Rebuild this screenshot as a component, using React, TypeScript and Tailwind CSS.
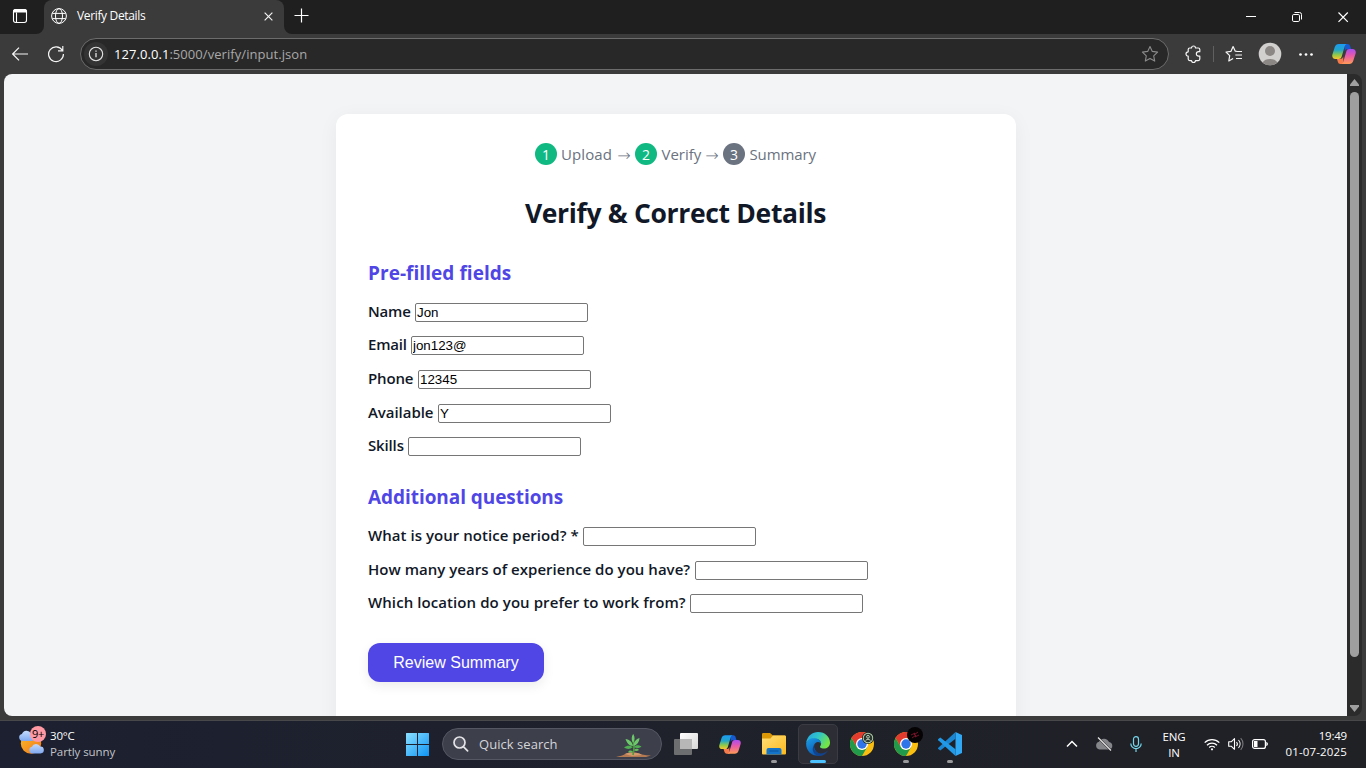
import React from "react";

const UI = "font-['Open_Sans','Noto_Sans',sans-serif]";

const prefilled = [
  { label: "Name", value: "Jon", row: "h-[33px]", cls: "w-[47px] tracking-[-0.2px]" },
  { label: "Email", value: "jon123@", row: "h-[34px]", cls: "w-[43px] tracking-[-0.2px]" },
  { label: "Phone", value: "12345", row: "h-[34px]", cls: "w-[50px] tracking-[-0.150px]" },
  { label: "Available", value: "Y", row: "h-[33px]", cls: "w-[70px] tracking-[-0.050px]" },
  { label: "Skills", value: "", row: "h-[34px]", cls: "w-[40px] tracking-[-0.150px]" },
];

const questions = [
  { label: "What is your notice period? *", value: "", row: "h-[34px]", cls: "w-[215px] tracking-[0.040px]" },
  { label: "How many years of experience do you have?", value: "", row: "h-[33px]", cls: "w-[327px] tracking-[0.030px]" },
  { label: "Which location do you prefer to work from?", value: "", row: "h-[34px]", cls: "w-[322px] tracking-[0.080px]" },
];

function Field({ label, value, row, cls }: { label: string; value: string; row: string; cls: string }) {
  return (
    <label className={`${row} flex items-start pt-[7px] text-[15px] font-semibold text-[#111827]`}>
      <span className={`${cls} shrink-0 whitespace-nowrap leading-[17px]`}>{label}</span>
      <input
        defaultValue={value}
        className="h-[19px] w-[173px] rounded-[2px] border border-[#767676] bg-white px-px pb-px font-['Liberation_Sans',Arial,sans-serif] text-[13.333px] font-normal leading-4 tracking-normal text-black outline-none"
      />
    </label>
  );
}

function Step({ n, label, color, cls }: { n: string; label: string; color: string; cls: string }) {
  return (
    <span className="flex items-center">
      <span className={`${color} mr-1 flex size-[22px] items-center justify-center rounded-full text-[14px] text-white`}>{n}</span>
      <span className={`${cls} whitespace-nowrap`}>{label}</span>
    </span>
  );
}

function Arrow() {
  return <span className="ml-[5px] mr-1 flex w-[14px] justify-center pt-[3px] font-['DejaVu_Sans',sans-serif] text-[16px] font-light leading-none">→</span>;
}

function Copilot({ id, className }: { id: string; className: string }) {
  return (
    <svg viewBox="0 0 24 22" className={className}>
      <defs>
        <linearGradient id={`${id}a`} x1="0" y1="0" x2="0" y2="1">
          <stop offset="0" stopColor="#1c9bf0" />
          <stop offset=".4" stopColor="#22a6c8" />
          <stop offset=".72" stopColor="#8fc94a" />
          <stop offset="1" stopColor="#fbc62c" />
        </linearGradient>
        <linearGradient id={`${id}b`} x1="0" y1="0" x2="0" y2="1">
          <stop offset="0" stopColor="#a94df0" />
          <stop offset=".45" stopColor="#e85aa8" />
          <stop offset="1" stopColor="#ff9a56" />
        </linearGradient>
      </defs>
      <path d="M12.500 1h3.200c1.300 0 2 .8 2.400 2l1 3h-3.400c-1.600 0-2.400.8-2.900 2.400z" fill="#1759d0" />
      <path d="M11.500 21H8.300c-1.300 0-2-.8-2.400-2l-.9-3h3.300c1.600 0 2.400-.8 2.900-2.400z" fill="#f77a4a" />
      <path d="M6.800 1H15c-1.300.2-1.900 1-2.300 2.300l-3 10.200c-.5 1.700-1.300 2.500-3 2.500H3.400C.8 16-.2 14 .4 11.500L2.800 4C3.500 2 4.800 1 6.800 1z" fill={`url(#${id}a)`} />
      <path d="M17.200 21H9c1.300-.2 1.900-1 2.300-2.300l3-10.200c.5-1.700 1.300-2.500 3-2.500h3.300c2.600 0 3.600 2 3 4.500L21.200 18c-.7 2-2 3-4 3z" fill={`url(#${id}b)`} />
    </svg>
  );
}

function Chrome() {
  return (
    <svg viewBox="0 0 24 24" className="size-6">
      <circle cx="12" cy="12" r="12" fill="#fbbf12" />
      <path d="M12 6h10.400A12 12 0 0 0 1.600 6L6.800 15z" fill="#e33b2e" />
      <path d="M1.600 6a12 12 0 0 0 10.400 18l5.200-9-5.200 3-5.200-3z" fill="#219b4b" />
      <circle cx="12" cy="12" r="6" fill="#fff" />
      <circle cx="12" cy="12" r="4.700" fill="#2f74e8" />
    </svg>
  );
}

function TitleBar() {
  return (
    <div className="flex h-[34px] bg-[#1f1f1f] text-white">
      <div className="flex w-11 shrink-0 items-end bg-[#3b3b3b]">
        <div className="flex h-full w-full items-center rounded-br-[8px] bg-[#1f1f1f] pb-[2px] pl-3">
          <svg viewBox="0 0 16 16" className="size-4" fill="none" stroke="#fff" strokeWidth="1.100">
            <rect x="1.500" y="1.500" width="13" height="13" rx="2.200" />
            <path d="M1.500 3.500a2 2 0 0 1 2-2h9a2 2 0 0 1 2 2v.5h-13z" fill="#fff" />
            <path d="M4.500 4.500v9.500" />
          </svg>
        </div>
      </div>
      <div className="w-60 shrink-0 bg-[#1f1f1f]">
        <div className="flex h-[34px] items-center rounded-t-[8px] bg-[#3b3b3b] pb-[2px] pl-[7px]">
          <svg viewBox="0 0 16 16" className="size-4" fill="none" stroke="#fff" strokeWidth="1">
            <circle cx="8" cy="8" r="7.400" />
            <ellipse cx="8" cy="8" rx="3.500" ry="7.400" />
            <path d="M1.300 5.400h13.400M1.300 10.600h13.400" />
          </svg>
          <span className="ml-[10px] w-[187px] text-[12px] tracking-[-0.350px]">Verify Details</span>
          <svg viewBox="0 0 10 10" className="mt-px size-[9px]" stroke="#f2f2f2" strokeWidth="1.300">
            <path d="m.7.700 8.600 8.600M9.300.700.700 9.300" />
          </svg>
        </div>
      </div>
      <div className="flex-1 bg-[#3b3b3b]">
        <div className="flex h-[34px] items-center rounded-bl-[8px] bg-[#1f1f1f] pl-[10px]">
          <svg viewBox="0 0 15 15" className="mb-[3px] size-[15px]" stroke="#fff" strokeWidth="1.200">
            <path d="M7.500.5v14M.5 7.500h14" />
          </svg>
          <div className="flex-1" />
          <svg viewBox="0 0 104 14" className="mr-[17px] h-[14px] w-[104px]" fill="none" stroke="#fff" strokeWidth="1">
            <path d="M1 6.500h10" />
            <rect x="47.500" y="4.500" width="7" height="7" rx="1.300" />
            <path d="M49.500 2.500h5a2 2 0 0 1 2 2v5" />
            <path d="m93.500 2.500 9.300 9.300M102.800 2.500l-9.300 9.300" strokeWidth="1.200" />
          </svg>
        </div>
      </div>
    </div>
  );
}

function ToolBar() {
  return (
    <div className="flex h-10 items-center bg-[#3b3b3b]">
      <svg viewBox="0 0 16 14" className="ml-3 h-[14px] w-4" fill="none" stroke="#f5f5f5" strokeWidth="1.200">
        <path d="M16 7H.8M7 .6.700 7 7 13.400" />
      </svg>
      <svg viewBox="0 0 18 18" className="ml-[19px] size-[18px]" fill="none" stroke="#f5f5f5" strokeWidth="1.200">
        <path d="M15.300 5.300A7.400 7.400 0 1 0 16.400 9M15.800 1v4.800H11" />
      </svg>
      <div className="ml-[15px] flex h-8 w-[1089px] items-center rounded-full border border-[#6c6c6c] bg-[#282828]">
        <span className="ml-[3px] flex size-6 items-center justify-center rounded-full bg-[#343434]">
          <svg viewBox="0 0 16 16" className="size-4" fill="none" stroke="#e4e4e4" strokeWidth="1.100">
            <circle cx="8" cy="8" r="6.700" />
            <path d="M8 7v4.300M8 4.500v1.300" strokeWidth="1.300" />
          </svg>
        </span>
        <span className="ml-[6px] flex-1 pt-[2px] text-[13px] tracking-[0.060px] text-[#a9a9a9]">
          <span className="text-white">127.0.0.1</span>:5000/verify/input.json
        </span>
        <svg viewBox="0 0 18 18" className="mr-[9px] size-[18px]" fill="none" stroke="#8b8b8b" strokeWidth="1.100" strokeLinejoin="round">
          <path d="m9 1.500 2.300 4.900 5.300.7-3.900 3.700 1 5.300L9 13.500l-4.700 2.600 1-5.300L1.400 7.100l5.300-.7z" />
        </svg>
      </div>
      <svg viewBox="0 0 16 18" className="ml-[16px] h-[18px] w-4" fill="none" stroke="#f5f5f5" strokeWidth="1.200" strokeLinejoin="round">
        <path d="M4.700 3h1.800a2 2 0 0 1 4 0h2.800a1.500 1.500 0 0 1 1.500 1.500v2.200h-1.200a2.200 2.200 0 0 0 0 4.500h1.200v2.900a1.500 1.500 0 0 1-1.500 1.500h-2.800a2 2 0 0 1-4 0H4.700a1.500 1.500 0 0 1-1.500-1.500v-2.900a2.200 2.200 0 0 1 0-4.400V4.500A1.500 1.500 0 0 1 4.700 3z" />
      </svg>
      <span className="ml-[12px] h-4 w-px bg-[#606060]" />
      <svg viewBox="0 0 18 18" className="ml-[11px] size-[18px]" fill="none" stroke="#f5f5f5" strokeWidth="1.200" strokeLinejoin="round">
        <path d="M12.200 6.500 10.300 6.200 8.100 1.500 6 6.300l-5 .7 3.700 3.600-.9 5.400 4.300-2.500M11 6.500h6M10.300 10h6.700M11 13.500h6" />
      </svg>
      <svg viewBox="0 0 24 24" className="ml-[15px] size-6">
        <circle cx="12" cy="12" r="11.300" fill="#d2d0ce" />
        <circle cx="12" cy="9" r="5" fill="#8b8785" />
        <path d="M4.500 20.400a8.500 6.500 0 0 1 15 0 11.300 11.300 0 0 1-15 0z" fill="#8b8785" />
      </svg>
      <svg viewBox="0 0 14 3" className="ml-[17px] h-[3px] w-[14px]" fill="#fff">
        <circle cx="1.500" cy="1.500" r="1.350" /><circle cx="7" cy="1.500" r="1.350" /><circle cx="12.500" cy="1.500" r="1.350" />
      </svg>
      <Copilot id="top" className="ml-[19px] h-[22px] w-6 shrink-0" />
    </div>
  );
}

function PageView() {
  return (
    <div className="flex h-[646px] bg-[#3b3b3b] pb-1 pl-1 pr-1">
      <div className="flex h-[642px] flex-1 overflow-hidden rounded-[8px] bg-[#2b2b2b]">
        <div className="h-full w-[1343px] overflow-hidden bg-[#f3f4f6] pl-[332px] pt-10">
          <div className="h-[640px] w-[680px] rounded-[12px] bg-white px-8 pt-7 shadow-[0_4px_20px_rgba(0,0,0,0.05)]">
            <div className="flex h-6 items-center justify-center pr-px text-[15px] text-[#6b7280]">
              <Step n="1" label="Upload" color="bg-[#10b981]" cls="w-[51px] tracking-[0.100px]" />
              <Arrow />
              <Step n="2" label="Verify" color="bg-[#10b981]" cls="w-[39px] pl-[0.500px]" />
              <Arrow />
              <Step n="3" label="Summary" color="bg-[#6b7280]" cls="w-[67px] pl-[0.500px] tracking-[-0.130px]" />
            </div>
            <h1 className="mt-[29px] h-[45px] pr-px text-center text-[26.500px] font-bold leading-9 tracking-[-0.330px] text-[#111827]">Verify &amp; Correct Details</h1>
            <h2 className="h-14 pt-[20px] text-[19px] font-bold leading-[26px] tracking-[0.050px] text-[#4f46e5]">Pre-filled fields</h2>
            {prefilled.map((f) => <Field key={f.label} {...f} />)}
            <h2 className="h-14 pt-[20px] text-[19px] font-bold leading-[26px] tracking-[-0.060px] text-[#4f46e5]">Additional questions</h2>
            {questions.map((f) => <Field key={f.label} {...f} />)}
            <button className="mt-[22px] h-[39px] w-[176px] rounded-[12px] bg-[#4f46e5] pt-px font-['Liberation_Sans',Arial,sans-serif] text-[16px] text-white shadow-[0_4px_12px_rgba(0,0,0,0.080)]">
              Review Summary
            </button>
          </div>
        </div>
        <div className="flex w-[15px] flex-col items-center justify-between pb-1 pt-[5px]">
          <svg viewBox="0 0 9 7" className="h-[7px] w-[9px]"><path d="M4.500 0 9 5.500V7H0V5.500z" fill="#9f9f9f" /></svg>
          <div className="mb-auto mt-[6px] h-[565px] w-[9px] rounded-full bg-[#9f9f9f]" />
          <svg viewBox="0 0 9 7" className="h-[7px] w-[9px]"><path d="M4.500 7 0 1.500V0h9v1.500z" fill="#9f9f9f" /></svg>
        </div>
      </div>
    </div>
  );
}

function Dot() {
  return <span className="absolute bottom-[1px] left-1/2 h-[3px] w-[6px] -translate-x-1/2 rounded-full bg-[#9a9a9d]" />;
}

function TaskBar() {
  return (
    <div className="flex h-12 items-center border-t border-[#48484a] bg-linear-to-r from-[#1c2030] via-[#1f212b] to-[#202125] pb-px text-white">
      <div className="flex w-[406px] items-center pl-[18px]">
        <div className="relative mb-[3px] size-[30px]">
          <svg viewBox="0 0 30 30" className="size-[30px]">
            <defs>
              <linearGradient id="sun" x1="0" y1="0" x2="1" y2="1"><stop offset="0" stopColor="#f8bd27" /><stop offset="1" stopColor="#f2741c" /></linearGradient>
              <linearGradient id="cld" x1="0" y1="0" x2="0" y2="1"><stop offset="0" stopColor="#c3dafc" /><stop offset="1" stopColor="#7fa8f0" /></linearGradient>
            </defs>
            <circle cx="13" cy="15.500" r="10.200" fill="url(#sun)" />
            <path d="M4.500 13a3.500 3.500 0 0 1-.6-6.900A5 5 0 0 1 13 5.500a3.800 3.800 0 0 1 1 7.500z" fill="url(#cld)" />
            <path d="M14.500 25.500a3.400 3.400 0 0 1-.6-6.700 4.500 4.500 0 0 1 8.300-.3 3.500 3.500 0 0 1 .3 7z" fill="url(#cld)" />
          </svg>
          <span className="absolute -top-[2px] left-[12px] flex size-4 items-center justify-center rounded-full bg-[#ff99a4] text-[11px] leading-none tracking-[-0.200px] text-[#000000]">9+</span>
        </div>
        <div className="mb-px ml-[2px] text-[11.500px] leading-4 tracking-[-0.200px]">
          <div>30°C</div>
          <div className="tracking-[-0.080px] text-[#c3c4c8]">Partly sunny</div>
        </div>
      </div>
      <svg viewBox="0 0 23 23" className="size-[23px]">
        <defs><linearGradient id="win" x1="0" y1="0" x2="1" y2="1"><stop offset="0" stopColor="#8be0ff" /><stop offset="1" stopColor="#0d94f5" /></linearGradient></defs>
        <path d="M0 .5Q0 0 .5 0H11v11H0zM12 0h10.500q.5 0 .5.500V11H12zM0 12h11v11H.5q-.5 0-.5-.5zM12 12h11v10.500q0 .5-.5.500H12z" fill="url(#win)" />
      </svg>
      <div className="ml-[13px] flex h-8 w-[220px] items-center overflow-hidden rounded-full border border-[#555763] bg-[#3d3f4b]">
        <svg viewBox="0 0 16 16" className="ml-[10px] size-4" fill="none" stroke="#e4e4e8" strokeWidth="1.700" strokeLinecap="round">
          <circle cx="6.500" cy="6.500" r="5.500" fill="#555762" /><path d="m10.600 10.800 4 4" />
        </svg>
        <span className="ml-[10px] flex-1 pt-px text-[13px] tracking-[0.050px] text-[#d4d5d9]">Quick search</span>
        <svg viewBox="0 0 36 25" className="mr-[9px] mt-[3px] h-[25px] w-9">
          <path d="M0 24c4-1 7-1.500 9-3 3-1 6-1.500 8-1.400 4-.2 6 1.400 9 1.800 3 .4 6 1 9 1.200l-5 1.400z" fill="#b47a52" />
          <path d="M9 21c5-2 12-2 17 1l-10 1z" fill="#d49a6c" />
          <path d="M17 22c1.500-5 1-12 0-18" stroke="#4e9a3c" strokeWidth="1.600" fill="none" />
          <path d="M17 10c-2-3-1.500-7 .3-9 1.700 3 1.700 6-.3 9z" fill="#6cc86a" />
          <path d="M17 13c-4 0-6-3-7.500-7 4 .5 7 3 7.500 7zM17.500 13c0-4 2.500-7 6-8-.2 4-2.500 7-6 8z" fill="#6cc86a" />
          <path d="M17 14c-4-2-6-1.500-9 .5 3 2 6 2 9-.5zM17.500 14c3-2.500 5-2.300 8-.5-2.500 2-5 2-8 .5z" fill="#4fae52" />
          <path d="M17 18c-3-1-4-.5-5 1 2 1 4 .8 5-1zM18 17c2-2 4-1.500 5 0-2 1.500-4 1.300-5 0z" fill="#66bd5c" />
        </svg>
      </div>
      <div className="flex items-center pl-[2px]">
        <div className="flex h-10 w-11 items-center justify-center">
          <svg viewBox="0 0 24 22" className="h-[22px] w-6">
            <defs><linearGradient id="tv" x1="0" y1="0" x2="1" y2="1"><stop offset="0" stopColor="#fff" /><stop offset="1" stopColor="#d6d6d6" /></linearGradient></defs>
            <rect x="0" y="6" width="18" height="16" rx="1" fill="#6d6e70" />
            <rect x="6" y="0" width="18" height="16" rx="1" fill="url(#tv)" />
            <path d="M6 6h12v10H6z" fill="#b7b7b8" />
          </svg>
        </div>
        <div className="flex h-10 w-11 items-center justify-center"><Copilot id="task" className="h-[21px] w-[22px]" /></div>
        <div className="relative flex h-10 w-11 items-center justify-center">
          <svg viewBox="0 0 24 22" className="h-[22px] w-6">
            <defs><linearGradient id="fold" x1="0" y1="0" x2="1" y2="1"><stop offset="0" stopColor="#ffdf79" /><stop offset="1" stopColor="#fdb91c" /></linearGradient></defs>
            <path d="M0 1.200Q0 0 1.200 0H8l3 2.600h12V8H0z" fill="#dc9706" />
            <path d="M0 5.500h8.500L11 2.500h12q1 0 1 1V20.500q0 1-1 1H1q-1 0-1-1z" fill="url(#fold)" />
            <path d="M4.500 21.500V17q0-2 2-2h11q2 0 2 2v4.500z" fill="#1474c7" />
            <path d="M7.500 18h9" stroke="#0b579f" strokeWidth="1.200" />
          </svg>
          <Dot />
        </div>
        <div className="relative mx-[2px] flex size-10 items-center justify-center rounded-[5px] border border-[#3b3c43] bg-[#2d2e35]">
          <svg viewBox="0 0 24 24" className="size-6">
            <defs>
              <linearGradient id="ea" x1="0" y1="0" x2="1" y2=".5"><stop offset="0" stopColor="#249fe5" /><stop offset=".5" stopColor="#30c5c9" /><stop offset="1" stopColor="#74e646" /></linearGradient>
              <linearGradient id="eb" x1="0" y1="0" x2=".6" y2="1"><stop offset="0" stopColor="#1b9de8" /><stop offset="1" stopColor="#0a55ad" /></linearGradient>
            </defs>
            <path d="M.2 10.500C1.500 3.500 6.500 0 12 0c7 0 12 5 12 10.500 0 4-3 6-6 6-3.500 0-4.500-1.300-3.800-2.200 2-2.700.5-7.300-4.700-7.300C5.500 7 2 8.500.2 10.500z" fill="url(#ea)" />
            <path d="M.1 11.500C1 7.500 5 5.600 9.300 6.300c4 .5 6 3.200 5.900 5.700-.7-1.500-2-2.200-3.500-2-3 .4-4.500 3.300-3.300 6.500 1.300 3.600 5 6 8.200 6.500C8 26 .1 20.500.1 11.500z" fill="url(#eb)" />
            <path d="M9.300 11.500c-1.700 2.300-1.700 5.500.7 8 2.700 2.800 8 2.500 12-1-2 3.500-5 5.500-8.500 5.400C7.500 23.500 4 17 9.300 11.500z" fill="#12438f" />
          </svg>
          <span className="absolute bottom-0 left-1/2 h-[3px] w-4 -translate-x-1/2 rounded-full bg-[#4cc2ff]" />
        </div>
        <div className="relative flex h-10 w-11 items-center justify-center">
          <Chrome />
          <svg viewBox="0 0 12 12" className="absolute right-[10px] top-[8px] size-3">
            <circle cx="6" cy="6" r="6" fill="#1c241f" /><circle cx="6" cy="6" r="5.200" fill="#b9d3b4" />
            <circle cx="6" cy="6" r="4.300" fill="#29372e" /><circle cx="6" cy="4.800" r="1.400" fill="none" stroke="#d9ead4" strokeWidth=".8" /><path d="M3.500 8.800q2.500-3.300 5 0" fill="none" stroke="#d9ead4" strokeWidth=".9" />
          </svg>
        </div>
        <div className="relative flex h-10 w-11 items-center justify-center">
          <Chrome />
          <svg viewBox="0 0 16 16" className="absolute right-[5px] top-[3px] size-4">
            <circle cx="8" cy="8" r="8" fill="#050304" /><path d="m4 8 4-2-1 2 4-3M5 11l4-3-1 2 4-2" stroke="#8b1830" strokeWidth=".8" fill="none" />
          </svg>
          <Dot />
        </div>
        <div className="relative flex h-10 w-11 items-center justify-center">
          <svg viewBox="0 0 24 24" className="size-6">
            <path d="M17.500 0 24 3v18l-6.500 3z" fill="#31a8f3" />
            <path d="M17.500 6.800 2.300 18.500.3 17q-.6-.6 0-1.200L17.500 0z" fill="#1a86d2" />
            <path d="M17.500 17.200 2.300 5.500.3 7q-.6.600 0 1.200L17.500 24z" fill="#2299e6" />
          </svg>
          <Dot />
        </div>
      </div>
      <div className="flex-1" />
      <svg viewBox="0 0 12 8" className="h-2 w-3" fill="none" stroke="#fff" strokeWidth="1.500"><path d="m1 6.500 5-5 5 5" /></svg>
      <svg viewBox="0 0 18 16" className="ml-[17px] h-4 w-[18px]">
        <path d="M4.500 13.500A4 4 0 0 1 4 5.700 5.500 5.500 0 0 1 14 6a3.800 3.800 0 0 1 .2 7.500z" fill="#85868a" />
        <path d="m3 1.500 13 13" stroke="#202125" strokeWidth="2.200" /><path d="m3 1.500 13 13" stroke="#e5e5e5" strokeWidth="1.200" />
      </svg>
      <svg viewBox="0 0 12 16" className="ml-[17px] h-4 w-3" fill="none" stroke="#75d5ea" strokeWidth="1.200">
        <rect x="3.500" y=".7" width="5" height="9.600" rx="2.500" /><path d="M.8 7.500a5.200 5.200 0 0 0 10.400 0M6 13v3" />
      </svg>
      <div className="ml-[19px] mt-px w-[26px] text-center text-[11.500px] leading-4 tracking-[-0.100px]">
        <div>ENG</div><div>IN</div>
      </div>
      <svg viewBox="0 0 16 13" className="ml-[17px] h-[13px] w-4" fill="none" stroke="#fff" strokeWidth="1.300">
        <path d="M.7 4.600a10.300 10.300 0 0 1 14.600 0M3 7.200a7 7 0 0 1 10 0M5.200 9.500a4 4 0 0 1 5.600 0" /><circle cx="8" cy="11.300" r="1.100" fill="#fff" stroke="none" />
      </svg>
      <svg viewBox="0 0 16 14" className="ml-2 h-[14px] w-4" fill="none" stroke="#fff" strokeWidth="1.100" strokeLinejoin="round">
        <path d="M.7 4.800h2.500L6.500 1.700v10.600L3.200 9.200H.7zM8.500 5a3 3 0 0 1 0 4M10.500 3a6 6 0 0 1 0 8" /><path d="M12.700 1.200a8.500 8.500 0 0 1 0 11.600" stroke="#77787b" />
      </svg>
      <svg viewBox="0 0 16 10" className="ml-2 h-[10px] w-4" fill="none" stroke="#fff" strokeWidth="1.200">
        <rect x=".6" y=".6" width="12.800" height="8.800" rx="2" /><path d="M2 2h3.500v6H2z" fill="#fff" stroke="none" /><path d="M14.300 3v4h.5l1-1.200V4.200l-1-1.200z" fill="#fff" stroke="none" />
      </svg>
      <div className="mb-px ml-[15px] mr-[19px] w-[64px] whitespace-nowrap text-right text-[11.500px] leading-4">
        <div className="tracking-[-0.200px]">19:49</div><div className="tracking-[0.150px]">01-07-2025</div>
      </div>
    </div>
  );
}

export default function App() {
  return (
    <div className={`${UI} flex h-[768px] w-[1366px] flex-col overflow-hidden`}>
      <TitleBar />
      <ToolBar />
      <PageView />
      <TaskBar />
    </div>
  );
}
